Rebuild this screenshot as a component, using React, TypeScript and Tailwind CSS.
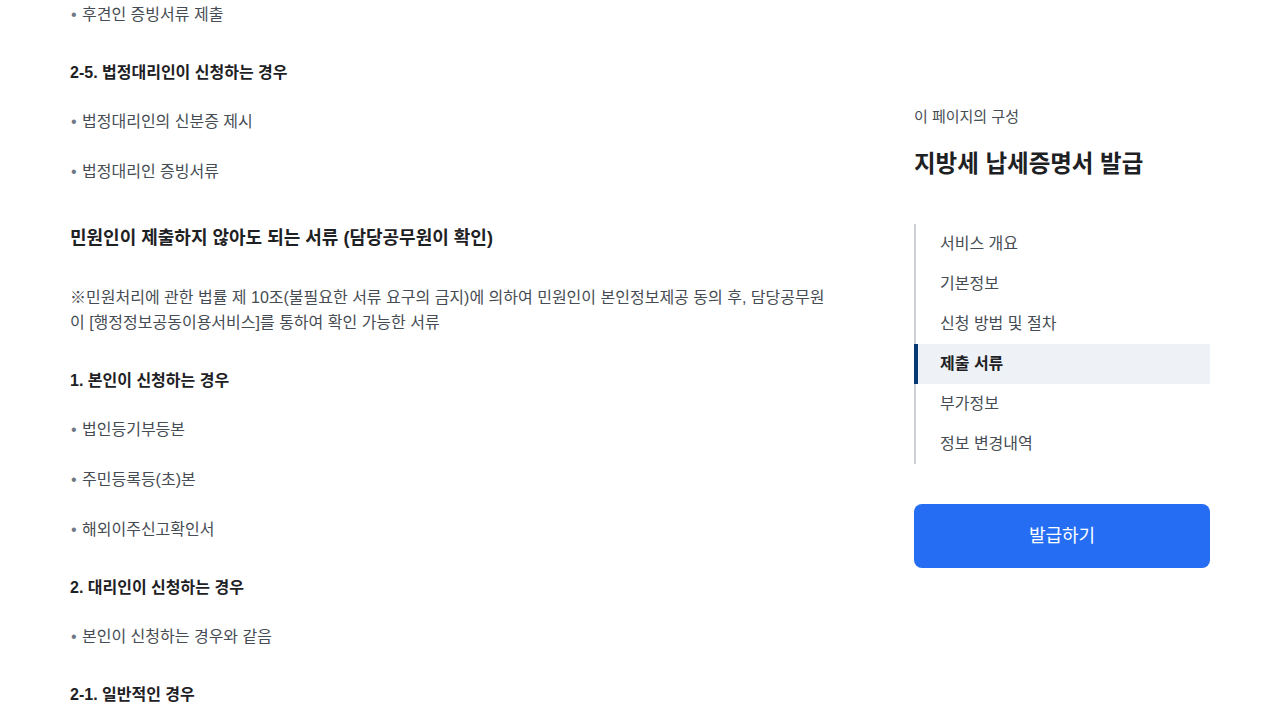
import React from 'react';

const font = { fontFamily: '"Liberation Sans", "Noto Sans CJK KR", sans-serif' };

const Bullet: React.FC<{ children: React.ReactNode; first?: boolean }> = ({ children, first }) => (
  <li className={`flex items-start text-[16px] leading-[25px] text-[#464c53] ${first ? '' : 'mt-[25px]'}`}>
    <span className="w-[12px] shrink-0 pl-[1px] text-[#6d7882]">•</span>
    <span>{children}</span>
  </li>
);

const SubHeading: React.FC<{ children: React.ReactNode }> = ({ children }) => (
  <h4 className="mt-[33px] mb-[24px] text-[16px] leading-[25px] font-bold text-[#1e2124]">{children}</h4>
);

export default function App() {
  const nav = ['서비스 개요', '기본정보', '신청 방법 및 절차', '제출 서류', '부가정보', '정보 변경내역'];
  const active = '제출 서류';

  return (
    <div style={font} className="w-full h-[720px] overflow-hidden bg-white">
      <div className="mx-auto w-[1140px] flex justify-between">
        {/* Main content */}
        <div className="w-[762px] pt-[2px]">
          <ul>
            <Bullet first>후견인 증빙서류 제출</Bullet>
          </ul>

          <SubHeading>2-5. 법정대리인이 신청하는 경우</SubHeading>
          <ul>
            <Bullet first>법정대리인의 신분증 제시</Bullet>
            <Bullet>법정대리인 증빙서류</Bullet>
          </ul>

          <h3 className="mt-[41px] text-[18px] leading-[27px] font-bold text-[#1e2124]">
            민원인이 제출하지 않아도 되는 서류 (담당공무원이 확인)
          </h3>
          <p className="mt-[33px] text-[16px] leading-[25px] text-[#464c53]">
            ※민원처리에 관한 법률 제 10조(불필요한 서류 요구의 금지)에 의하여 민원인이 본인정보제공 동의 후, 담당공무원이 [행정정보공동이용서비스]를 통하여 확인 가능한 서류
          </p>

          <SubHeading>1. 본인이 신청하는 경우</SubHeading>
          <ul>
            <Bullet first>법인등기부등본</Bullet>
            <Bullet>주민등록등(초)본</Bullet>
            <Bullet>해외이주신고확인서</Bullet>
          </ul>

          <SubHeading>2. 대리인이 신청하는 경우</SubHeading>
          <ul>
            <Bullet first>본인이 신청하는 경우와 같음</Bullet>
          </ul>

          <SubHeading>2-1. 일반적인 경우</SubHeading>
        </div>

        {/* Sidebar */}
        <aside className="w-[296px] pt-[106px]">
          <p className="text-[15px] leading-[22px] text-[#464c53]">이 페이지의 구성</p>
          <h2 className="mt-[20px] text-[23.5px] leading-[32px] font-bold text-[#1e2124]">지방세 납세증명서 발급</h2>
          <ul className="mt-[44px] border-l-2 border-[#cdd1d5]">
            {nav.map((item) => {
              const isActive = item === active;
              return (
                <li
                  key={item}
                  className={`h-[40px] flex items-center text-[16px] -ml-[2px] ${
                    isActive
                      ? 'bg-[#eef2f7] border-l-4 border-[#063a74] pl-[22px] font-bold text-[#1e2124]'
                      : 'border-l-2 border-transparent pl-[24px] text-[#464c53]'
                  }`}
                >
                  {item}
                </li>
              );
            })}
          </ul>
          <button className="mt-[40px] w-full h-[64px] rounded-[8px] bg-[#256ef4] text-white text-[18px]">
            발급하기
          </button>
        </aside>
      </div>
    </div>
  );
}
